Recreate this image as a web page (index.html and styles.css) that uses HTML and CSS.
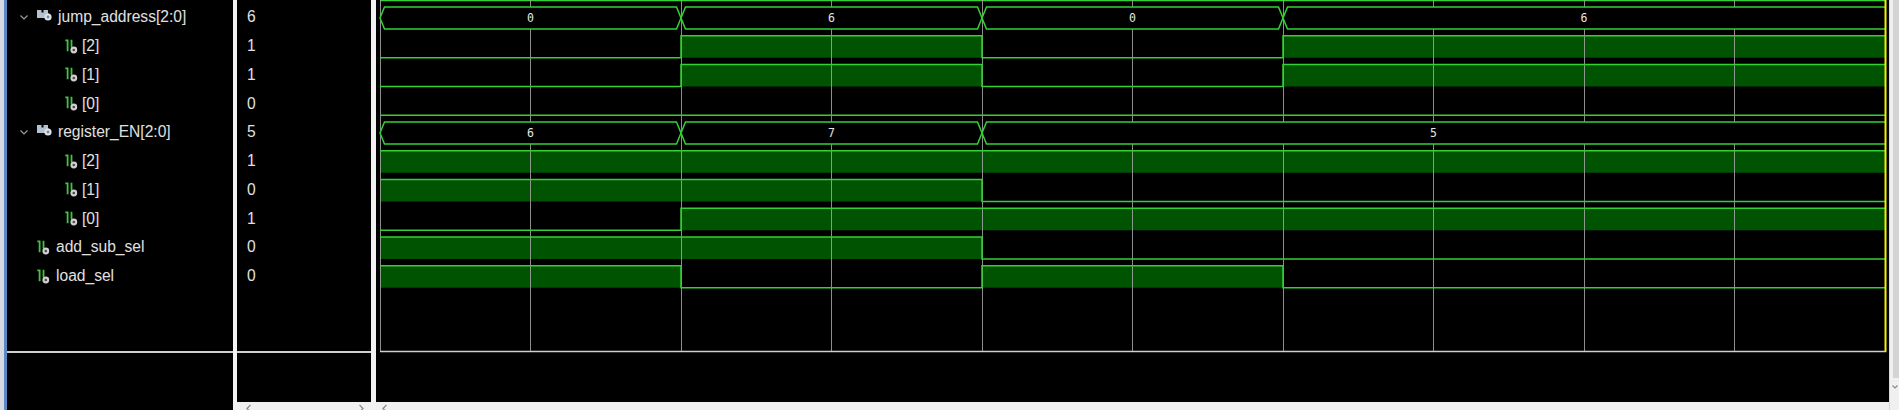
FILE: index.html
```html
<!DOCTYPE html>
<html>
<head>
<meta charset="utf-8">
<link rel="stylesheet" href="styles.css">
</head>
<body>
<div class="app">
  <div class="edge"></div>

  <div class="names">
    <div class="list">
      <div class="row lv0"><svg class="chev" width="8" height="5" viewBox="0 0 8 5"><polyline points="0.5,0.5 4,4 7.5,0.5" fill="none" stroke="#9a9a9a" stroke-width="1.2"/></svg><svg class="bus" width="15" height="11" viewBox="0 0 15 11"><path d="M0 0h4.5v2.5h2v-2.5h4.5v3.5h1v4.5h-12z" fill="#b4c2d0"/><circle cx="11" cy="7" r="3.6" fill="#dde3e9"/><circle cx="11" cy="7" r="1.4" fill="#7a8896"/></svg><span>jump_address[2:0]</span></div>
      <div class="row lv1"><svg class="bit" width="13" height="15" viewBox="0 0 13 15"><path d="M0.3 1.3h2.3v11M6.5 0.8v7.5" fill="none" stroke="#41c441" stroke-width="1.8"/><circle cx="8.8" cy="11" r="3.4" fill="#cfcfcf"/><circle cx="8.8" cy="11" r="1.3" fill="#4a4a4a"/></svg><span>[2]</span></div>
      <div class="row lv1"><svg class="bit" width="13" height="15" viewBox="0 0 13 15"><path d="M0.3 1.3h2.3v11M6.5 0.8v7.5" fill="none" stroke="#41c441" stroke-width="1.8"/><circle cx="8.8" cy="11" r="3.4" fill="#cfcfcf"/><circle cx="8.8" cy="11" r="1.3" fill="#4a4a4a"/></svg><span>[1]</span></div>
      <div class="row lv1"><svg class="bit" width="13" height="15" viewBox="0 0 13 15"><path d="M0.3 1.3h2.3v11M6.5 0.8v7.5" fill="none" stroke="#41c441" stroke-width="1.8"/><circle cx="8.8" cy="11" r="3.4" fill="#cfcfcf"/><circle cx="8.8" cy="11" r="1.3" fill="#4a4a4a"/></svg><span>[0]</span></div>
      <div class="row lv0"><svg class="chev" width="8" height="5" viewBox="0 0 8 5"><polyline points="0.5,0.5 4,4 7.5,0.5" fill="none" stroke="#9a9a9a" stroke-width="1.2"/></svg><svg class="bus" width="15" height="11" viewBox="0 0 15 11"><path d="M0 0h4.5v2.5h2v-2.5h4.5v3.5h1v4.5h-12z" fill="#b4c2d0"/><circle cx="11" cy="7" r="3.6" fill="#dde3e9"/><circle cx="11" cy="7" r="1.4" fill="#7a8896"/></svg><span>register_EN[2:0]</span></div>
      <div class="row lv1"><svg class="bit" width="13" height="15" viewBox="0 0 13 15"><path d="M0.3 1.3h2.3v11M6.5 0.8v7.5" fill="none" stroke="#41c441" stroke-width="1.8"/><circle cx="8.8" cy="11" r="3.4" fill="#cfcfcf"/><circle cx="8.8" cy="11" r="1.3" fill="#4a4a4a"/></svg><span>[2]</span></div>
      <div class="row lv1"><svg class="bit" width="13" height="15" viewBox="0 0 13 15"><path d="M0.3 1.3h2.3v11M6.5 0.8v7.5" fill="none" stroke="#41c441" stroke-width="1.8"/><circle cx="8.8" cy="11" r="3.4" fill="#cfcfcf"/><circle cx="8.8" cy="11" r="1.3" fill="#4a4a4a"/></svg><span>[1]</span></div>
      <div class="row lv1"><svg class="bit" width="13" height="15" viewBox="0 0 13 15"><path d="M0.3 1.3h2.3v11M6.5 0.8v7.5" fill="none" stroke="#41c441" stroke-width="1.8"/><circle cx="8.8" cy="11" r="3.4" fill="#cfcfcf"/><circle cx="8.8" cy="11" r="1.3" fill="#4a4a4a"/></svg><span>[0]</span></div>
      <div class="row top-bit"><svg class="bit" width="13" height="15" viewBox="0 0 13 15"><path d="M0.3 1.3h2.3v11M6.5 0.8v7.5" fill="none" stroke="#41c441" stroke-width="1.8"/><circle cx="8.8" cy="11" r="3.4" fill="#cfcfcf"/><circle cx="8.8" cy="11" r="1.3" fill="#4a4a4a"/></svg><span>add_sub_sel</span></div>
      <div class="row top-bit"><svg class="bit" width="13" height="15" viewBox="0 0 13 15"><path d="M0.3 1.3h2.3v11M6.5 0.8v7.5" fill="none" stroke="#41c441" stroke-width="1.8"/><circle cx="8.8" cy="11" r="3.4" fill="#cfcfcf"/><circle cx="8.8" cy="11" r="1.3" fill="#4a4a4a"/></svg><span>load_sel</span></div>
    </div>
  </div>

  <div class="split"></div>

  <div class="values-col">
    <div class="values">
      <div class="list">
        <div class="row val">6</div>
        <div class="row val">1</div>
        <div class="row val">1</div>
        <div class="row val">0</div>
        <div class="row val">5</div>
        <div class="row val">1</div>
        <div class="row val">0</div>
        <div class="row val">1</div>
        <div class="row val">0</div>
        <div class="row val">0</div>
      </div>
    </div>
    <div class="hscroll spread">
      <svg width="7" height="8" viewBox="0 0 7 8"><polyline points="5.5,3 2,6.5 5.5,10" fill="none" stroke="#888" stroke-width="1.2"/></svg>
      <svg width="7" height="8" viewBox="0 0 7 8"><polyline points="1.5,3 5,6.5 1.5,10" fill="none" stroke="#888" stroke-width="1.2"/></svg>
    </div>
  </div>

  <div class="split2"></div>

  <div class="wave-col">
    <div class="wave">
      <svg width="1513" height="392" viewBox="0 0 1513 392">
        <line x1="4" y1="0.6" x2="1509" y2="0.6" class="sig"/>
        <g class="fill">
          <rect x="305" y="35.75" width="301" height="22"/>
          <rect x="907" y="35.75" width="602" height="22"/>
          <rect x="305" y="64.5" width="301" height="22"/>
          <rect x="907" y="64.5" width="602" height="22"/>
          <rect x="4" y="150.75" width="1505" height="22"/>
          <rect x="4" y="179.5" width="602" height="22"/>
          <rect x="305" y="208.25" width="1204" height="22"/>
          <rect x="4" y="237" width="602" height="22"/>
          <rect x="4" y="265.75" width="301" height="22"/>
          <rect x="606" y="265.75" width="301" height="22"/>
        </g>
        <g class="grid">
          <line x1="4.5" y1="0" x2="4.5" y2="351"/>
          <line x1="154.5" y1="0" x2="154.5" y2="351"/>
          <line x1="305.5" y1="0" x2="305.5" y2="351"/>
          <line x1="455.5" y1="0" x2="455.5" y2="351"/>
          <line x1="606.5" y1="0" x2="606.5" y2="351"/>
          <line x1="756.5" y1="0" x2="756.5" y2="351"/>
          <line x1="907.5" y1="0" x2="907.5" y2="351"/>
          <line x1="1057.5" y1="0" x2="1057.5" y2="351"/>
          <line x1="1208.5" y1="0" x2="1208.5" y2="351"/>
          <line x1="1358.5" y1="0" x2="1358.5" y2="351"/>
        </g>
        <g class="bus">
          <polygon points="4,18 8.5,7 300.5,7 305,18 300.5,29 8.5,29"/>
          <polygon points="305,18 309.5,7 601.5,7 606,18 601.5,29 309.5,29"/>
          <polygon points="606,18 610.5,7 902.5,7 907,18 902.5,29 610.5,29"/>
          <polyline points="1509,7 911.5,7 907,18 911.5,29 1509,29"/>
          <polygon points="4,133 8.5,122 300.5,122 305,133 300.5,144 8.5,144"/>
          <polygon points="305,133 309.5,122 601.5,122 606,133 601.5,144 309.5,144"/>
          <polyline points="1509,122 610.5,122 606,133 610.5,144 1509,144"/>
        </g>
        <g class="lbl">
          <text x="154.5" y="22">0</text>
          <text x="455.5" y="22">6</text>
          <text x="756.5" y="22">0</text>
          <text x="1208" y="22">6</text>
          <text x="154.5" y="137">6</text>
          <text x="455.5" y="137">7</text>
          <text x="1057.5" y="137">5</text>
        </g>
        <g class="sig">
          <polyline points="4,57.75 305,57.75 305,35.75 606,35.75 606,57.75 907,57.75 907,35.75 1509,35.75"/>
          <polyline points="4,86.5 305,86.5 305,64.5 606,64.5 606,86.5 907,86.5 907,64.5 1509,64.5"/>
          <polyline points="4,115.25 1509,115.25"/>
          <polyline points="4,150.75 1509,150.75"/>
          <polyline points="4,179.5 606,179.5 606,201.5 1509,201.5"/>
          <polyline points="4,230.25 305,230.25 305,208.25 1509,208.25"/>
          <polyline points="4,237 606,237 606,259 1509,259"/>
          <polyline points="4,265.75 305,265.75 305,287.75 606,287.75 606,265.75 907,265.75 907,287.75 1509,287.75"/>
        </g>
        <line x1="1509.5" y1="0" x2="1509.5" y2="351" class="cursor"/>
        <line x1="4" y1="351.5" x2="1510.5" y2="351.5" class="frame"/>
      </svg>
    </div>
    <div class="hscroll">
      <svg class="left-arrow" width="7" height="8" viewBox="0 0 7 8"><polyline points="5.5,3 2,6.5 5.5,10" fill="none" stroke="#888" stroke-width="1.2"/></svg>
    </div>
  </div>

  <div class="vscroll"><div class="thumb"></div><svg class="down" width="6" height="6" viewBox="0 0 6 6"><polyline points="0.5,1.5 3,4 5.5,1.5" fill="none" stroke="#888" stroke-width="1.1"/></svg></div>
</div>
</body>
</html>
```

FILE: styles.css
```css
html, body {
  margin: 0;
  padding: 0;
  background: #f0f0f0;
}

.app {
  display: flex;
  width: 1899px;
  height: 410px;
  overflow: hidden;
  font-family: "Liberation Sans", Arial, sans-serif;
  font-size: 15.6px;
  color: #e0e0e0;
}

.edge {
  width: 7px;
  box-sizing: border-box;
  border-left: 4px solid #d6dae0;
  background: #5d88c6;
}

.names {
  width: 226px;
  background: #000;
  display: flex;
  flex-direction: column;
}

.list {
  height: 353px;
  box-sizing: border-box;
  padding-top: 3px;
  border-bottom: 2px solid #cfcfcf;
  display: flex;
  flex-direction: column;
}

.row {
  height: 28.75px;
  flex: none;
  display: flex;
  align-items: center;
  white-space: nowrap;
}

.row span {
  display: block;
}

.lv0 {
  padding-left: 13px;
}

.lv0 .chev {
  margin-right: 9px;
  margin-top: 1px;
}

.lv0 .bus {
  margin-right: 6px;
  margin-top: -3px;
}

.lv1 {
  padding-left: 58px;
}

.lv1 .bit {
  margin-right: 4px;
}

.top-bit {
  padding-left: 30px;
}

.top-bit .bit {
  margin-right: 6px;
}

.split {
  width: 4px;
  background: #f2f2f2;
}

.split2 {
  width: 5px;
  background: #f2f2f2;
}

.values-col {
  width: 134px;
  display: flex;
  flex-direction: column;
}

.values {
  flex: 1;
  background: #000;
}

.val {
  padding-left: 10px;
}

.hscroll {
  height: 8px;
  background: #f0f0f0;
  display: flex;
  align-items: flex-start;
  overflow: hidden;
}

.hscroll.spread {
  justify-content: space-between;
  padding: 0 6px 0 8px;
}

.left-arrow {
  margin-left: 5px;
}

.wave-col {
  width: 1513px;
  display: flex;
  flex-direction: column;
}

.wave {
  flex: 1;
  background: #000;
  overflow: hidden;
}

.wave svg {
  display: block;
}

.fill rect {
  fill: #005300;
}

.grid line {
  stroke: #a6a6a6;
  stroke-width: 1;
  opacity: 0.85;
}

.bus polygon,
.bus polyline {
  fill: #000;
  stroke: #34d134;
  stroke-width: 1.5;
}

.sig,
.sig polyline {
  fill: none;
  stroke: #34d134;
  stroke-width: 1.5;
}

.lbl text {
  font-family: "DejaVu Sans Mono", monospace;
  font-size: 11.5px;
  fill: #e6e6e6;
  text-anchor: middle;
}

.cursor {
  stroke: #f2f200;
  stroke-width: 2;
}

.frame {
  stroke: #cfcfcf;
  stroke-width: 1.5;
}

.vscroll {
  width: 10px;
  background: #f0f0f0;
  border-left: 1px solid #d8d8d8;
  box-sizing: border-box;
  display: flex;
  flex-direction: column;
  align-items: flex-end;
}

.thumb {
  width: 6px;
  height: 378px;
  background: #d4d4d4;
}

.down {
  margin-top: 6px;
  margin-right: 1px;
}
```
